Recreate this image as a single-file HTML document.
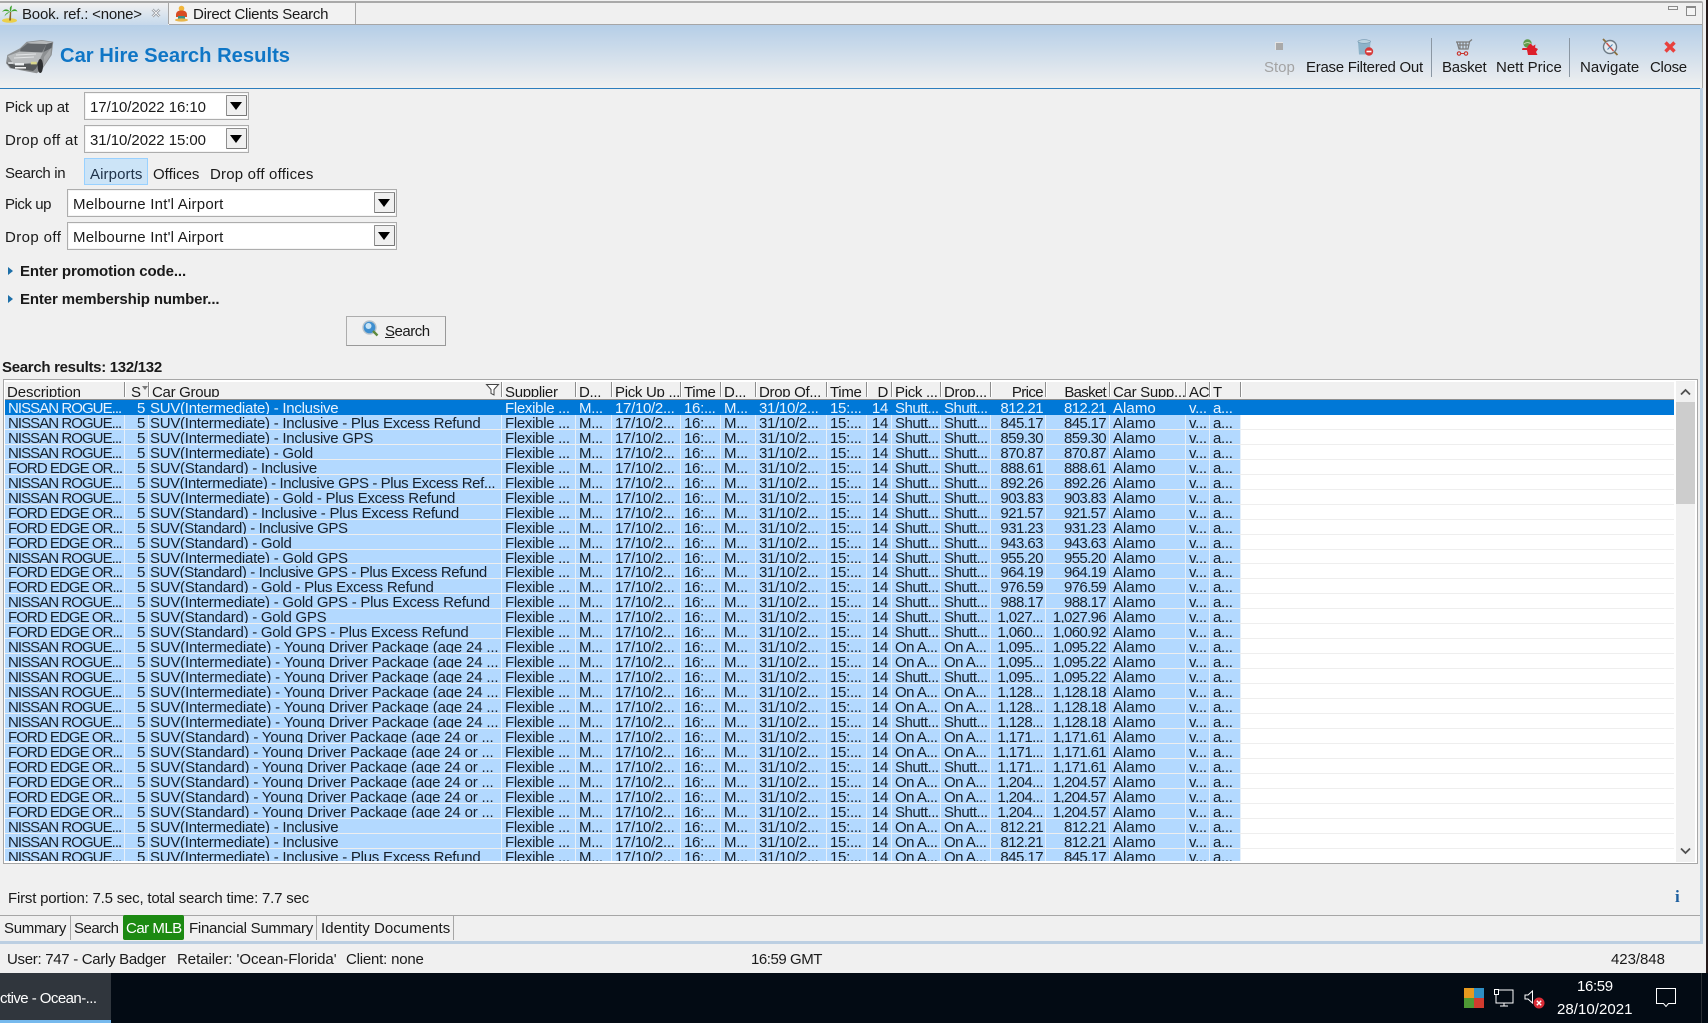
<!DOCTYPE html>
<html lang="en"><head><meta charset="utf-8"><title>Car Hire Search Results</title>
<style>
html,body{margin:0;padding:0}
body{width:1708px;height:1023px;position:relative;overflow:hidden;background:#f0f0f0;font-family:"Liberation Sans",sans-serif;font-size:15px;color:#1a1a1a}
.a,.t{position:absolute}
.t{white-space:nowrap;line-height:20px;height:20px;letter-spacing:-.12px;margin-top:1px}
.b{font-weight:bold}
.box{position:absolute;background:#fff;border:1px solid #adadad;box-sizing:border-box;box-shadow:inset 0 0 0 1px #f4f4f4}
.dd{position:absolute;width:21px;height:21px;box-sizing:border-box;background:#f0f0f0;border:1px solid #8f8f8f;border-radius:1px;border-right-color:#777;border-bottom-color:#777}
.dd:after{content:"";position:absolute;left:3px;top:6px;border-left:6.5px solid transparent;border-right:6.5px solid transparent;border-top:8px solid #000}
svg{position:absolute;overflow:visible}
#tbl{position:absolute;left:3px;top:379px;width:1695px;height:485px;box-sizing:border-box;border:1px solid #a6a6a6;background:#fff;box-shadow:inset 0 0 0 1px #fff}
#hd{position:absolute;left:5px;top:382px;width:1669px;height:17px;background:#f0f0f0;border-bottom:1px solid #8e8e8e;overflow:hidden;display:flex;line-height:17px}
#hd i{font-style:normal;display:block;box-sizing:border-box;height:15px;padding:2px 3px 0;line-height:17px;border-right:1px solid #8c8c8c;box-shadow:1px 0 0 #fff;white-space:nowrap;overflow:hidden;letter-spacing:-.3px;flex:none}
#rows{position:absolute;left:5px;top:400px;width:1669px;height:461px;overflow:hidden;background:#fff}
.r{height:14.96px;display:flex;overflow:hidden;box-sizing:border-box;border-bottom:1px solid #eeeeee;letter-spacing:-.3px;line-height:18px;color:#16202c}
.r i{font-style:normal;display:block;box-sizing:border-box;height:14px;padding:0 3px;background:#b3d9ff;border-right:1px solid #e6f0fa;white-space:nowrap;overflow:hidden;flex:none}
.r.s{background:#0078d7;color:#eaf4ff;border-bottom-color:#0078d7;height:14.96px}
.r.s i{background:#0078d7;border-right-color:#0078d7;height:15px}
.r i:nth-child(1),#hd i:nth-child(1){width:120px}
.r i:nth-child(2),#hd i:nth-child(2){width:24px;text-align:right}
.r i:nth-child(3),#hd i:nth-child(3){width:353px}
.r i:nth-child(4),#hd i:nth-child(4){width:74px}
.r i:nth-child(5),#hd i:nth-child(5){width:36px}
.r i:nth-child(6),#hd i:nth-child(6){width:69px}
.r i:nth-child(7),#hd i:nth-child(7){width:40px}
.r i:nth-child(8),#hd i:nth-child(8){width:35px}
.r i:nth-child(9),#hd i:nth-child(9){width:71px}
.r i:nth-child(10),#hd i:nth-child(10){width:40px}
.r i:nth-child(11),#hd i:nth-child(11){width:25px;text-align:right}
.r i:nth-child(12),#hd i:nth-child(12){width:49px}
.r i:nth-child(13),#hd i:nth-child(13){width:50px}
.r i:nth-child(14),#hd i:nth-child(14){width:55px;text-align:right}
.r i:nth-child(15),#hd i:nth-child(15){width:64px;text-align:right}
.r i:nth-child(16),#hd i:nth-child(16){width:76px}
.r i:nth-child(17),#hd i:nth-child(17){width:24px}
.r i:nth-child(18),#hd i:nth-child(18){width:31px}
.r i:nth-child(1){letter-spacing:-.95px}
.r i:nth-child(3){padding-left:1px;letter-spacing:-.26px}
.r.y i:nth-child(3){letter-spacing:-.18px}
.r.g i:nth-child(3){letter-spacing:-.4px}
.r i:nth-child(12),.r i:nth-child(13){letter-spacing:-.5px}
.r i:nth-child(14){letter-spacing:-.55px;padding-right:2px}
.r i:nth-child(15){letter-spacing:-.65px}
.r i:nth-child(16){letter-spacing:.05px}
#hd i:nth-child(1){padding-left:2px;letter-spacing:-.1px}
#hd i:nth-child(14){letter-spacing:-.6px;padding-right:2px}
#hd i:nth-child(15){letter-spacing:-.7px}
</style></head><body>

<!-- window tab strip -->
<div class="a" style="left:0;top:1px;width:1703px;height:2px;background:#a9a9a9;border-top-right-radius:4px"></div>
<div class="a" style="left:169px;top:24px;width:1534px;height:1px;background:#a6a6a6"></div>
<div class="a" style="left:0;top:3px;width:168px;height:22px;background:linear-gradient(#f0f0f0,#c6d9ec)"></div>
<div class="a" style="left:168px;top:3px;width:186px;height:21px;background:#f2f2f2;border-left:1px solid #a6a6a6;border-right:1px solid #a6a6a6"></div>
<svg style="left:1px;top:5px" width="17" height="18" viewBox="0 0 17 18"><ellipse cx="8.500" cy="15.500" rx="7.500" ry="2.300" fill="#ecd04a"/><path d="M8 15.500L9 7l1.200 0L10 15.500z" fill="#8a6a2a"/><path d="M9.500 7C6 3 3 4 1 7 3.500 5.500 6 6 9.500 7zM9.500 7C13 3 15 4 16.500 6.500 14 5.500 12 6 9.500 7zM9.500 7C8 3 9 1.500 11 .5 10.500 3 10.500 5 9.500 7zM9.500 7C6 7 4 9 3.500 11.500 5.500 9 7 8 9.500 7z" fill="#3fa32d"/></svg>
<div class="t" style="left:22px;top:4px;letter-spacing:-.2px">Book. ref.: &lt;none&gt;</div>
<svg style="left:151px;top:8px" width="10" height="10" viewBox="0 0 10 10"><path d="M1.500 1.500L8.500 8.500M8.500 1.500L1.500 8.500" stroke="#8d9298" stroke-width="2.600"/><path d="M1.500 1.500L8.500 8.500M8.500 1.500L1.500 8.500" stroke="#f4f4f4" stroke-width="1"/></svg>
<svg style="left:174px;top:5px" width="15" height="17" viewBox="0 0 15 17"><circle cx="7.500" cy="3.500" r="2.800" fill="#f2b63c"/><path d="M2 10C2 6 5 5.500 7.500 5.500S13 6 13 10L13 12 2 12z" fill="#d94c24"/><rect x="4" y="11" width="7" height="4" fill="#3a8f8a"/><ellipse cx="7.500" cy="15" rx="6.500" ry="1.600" fill="#e9b64a"/></svg>
<div class="t" style="left:193px;top:4px;letter-spacing:-.27px">Direct Clients Search</div>
<div class="a" style="left:1668px;top:6px;width:8px;height:2px;background:#f4f4f4;border:1px solid #8a8a8a"></div>
<div class="a" style="left:1686px;top:6px;width:8px;height:7px;border:1px solid #8a8a8a;border-top-width:2px;background:#f4f4f4"></div>

<!-- window frame -->
<div class="a" style="left:1702px;top:3px;width:1px;height:85px;background:#a9a9a9"></div>
<div class="a" style="left:1700px;top:88px;width:3px;height:855px;background:#bccfe2"></div>
<div class="a" style="left:1706px;top:0;width:2px;height:973px;background:#241a1a"></div>

<!-- header -->
<div class="a" style="left:0;top:25px;width:1702px;height:63px;background:linear-gradient(#b5cee7,#f0f0f0)"></div>
<div class="a" style="left:0;top:88px;width:1700px;height:1px;background:#2d7dbd"></div>
<svg style="left:6px;top:39px" width="48" height="35" viewBox="0 0 48 35"><path d="M0 24.300L1.300 16 14 9.300 20.700 2.700 35.700 1 47.300 2.700 45.700 16 35.700 31 30.700 34.300 4 29.300z" fill="#8d9092"/><path d="M21.500 3.500L35.700 1.800 46.500 3.200 42 5.500 28 6z" fill="#b7babc"/><path d="M14.500 10L21.500 4.500 40.500 5 36 13.500 14 13.500z" fill="#62666a"/><path d="M40.500 5L46.500 3.500 45.500 9 37.500 13z" fill="#5a5e62"/><path d="M1.800 17L14 12.500 37 13.500 32.500 23 8 25.500z" fill="#b9bcbe"/><path d="M10 16L30 15M8 19L28 18" stroke="#e2e4e6" stroke-width=".9" fill="none"/><path d="M.6 23.500L8 25.500 32.500 24.500 30 29.500 27 32 5 29z" fill="#55585a"/><rect x="9" y="24" width="9" height="2.400" fill="#e9ecee"/><rect x="24.800" y="22.800" width="6" height="2.600" fill="#d9d68c"/><rect x="2.200" y="23" width="5" height="2" fill="#cfd2d4"/><rect x="9" y="28" width="11" height="1.600" fill="#f0f0f0"/><ellipse cx="34.300" cy="27" rx="2.700" ry="7" fill="#2e3032"/><path d="M38 18L45 9 44.500 16 37 28z" fill="#a7aaac"/></svg>
<div class="t b" style="left:60px;top:44px;height:22px;line-height:22px;font-size:20.200px;color:#0f76c6;letter-spacing:0">Car Hire Search Results</div>

<!-- toolbar -->
<div class="a" style="left:1275px;top:42px;width:8px;height:8px;background:#a9a9a9;border-top:1px solid #e4e4e4;border-left:1px solid #e4e4e4;box-sizing:border-box"></div>
<svg style="left:1357px;top:39px" width="17" height="17" viewBox="0 0 17 17"><path d="M1 2.500h12.500L12.500 15.500H2z" fill="#8db3c9"/><ellipse cx="7.200" cy="2.500" rx="6.300" ry="1.800" fill="#bcd3e0" stroke="#6f94ab" stroke-width=".6"/><circle cx="12" cy="12.500" r="4.200" fill="#d63a3a"/><rect x="9.500" y="11.700" width="5" height="1.600" fill="#fff"/></svg>
<svg style="left:1455px;top:39px" width="18" height="17" viewBox="0 0 18 17"><path d="M1 3H14L17 .5M2 3L4 10H13L14.500 3M5 3V10M8 3V10M11 3V10M2.500 6H14" fill="none" stroke="#7c7c7c" stroke-width="1.200"/><circle cx="4" cy="14.500" r="1.700" fill="none" stroke="#c8332b" stroke-width="1.100"/><circle cx="11" cy="14.500" r="1.700" fill="none" stroke="#c8332b" stroke-width="1.100"/><path d="M5.500 14.500H9.500" stroke="#c8332b"/></svg>
<svg style="left:1521px;top:39px" width="17" height="17" viewBox="0 0 17 17"><circle cx="6.500" cy="4.500" r="4.200" fill="#5f9c4a"/><path d="M3 5C5 3 8 3 10 5" stroke="#c2d8a8" fill="none"/><path d="M7 7L9.500 4.500 12 7 14.500 5.500 14 8.500 17 10 15 13 16.500 16 7 16 6 11 1 11 1.500 9 6 9z" fill="#dd1f2b"/></svg>
<svg style="left:1601px;top:38px" width="18" height="18" viewBox="0 0 18 18"><circle cx="9" cy="9" r="6.500" fill="#e4ecf2" stroke="#6d7a85" stroke-width="1.400"/><path d="M5.500 5L12.500 13" stroke="#c8534a" stroke-width="1.500"/><path d="M2 1L5 4M13.500 14L16.500 17" stroke="#8a6f3e" stroke-width="1.800"/><path d="M6.500 11.500L11.500 6.500" stroke="#4a7fae" stroke-width="1"/></svg>
<svg style="left:1663px;top:40px" width="14" height="14" viewBox="0 0 14 14"><path d="M2.500 2.500L11.500 11.500M11.500 2.500L2.500 11.500" stroke="#e8413d" stroke-width="3.400"/></svg>
<div class="t" style="left:1264px;top:57px;color:#a3a3a3;letter-spacing:0">Stop</div>
<div class="t" style="left:1306px;top:57px;letter-spacing:-.27px">Erase Filtered Out</div>
<div class="a" style="left:1431px;top:38px;width:1px;height:39px;background:#8b97a3"></div>
<div class="t" style="left:1442px;top:57px;letter-spacing:-.25px">Basket</div>
<div class="t" style="left:1496px;top:57px;letter-spacing:0">Nett Price</div>
<div class="a" style="left:1569px;top:38px;width:1px;height:39px;background:#8b97a3"></div>
<div class="t" style="left:1580px;top:57px;letter-spacing:0">Navigate</div>
<div class="t" style="left:1650px;top:57px;letter-spacing:-.3px">Close</div>

<!-- form -->
<div class="t" style="left:5px;top:97px;letter-spacing:-.2px">Pick up at</div>
<div class="box" style="left:84px;top:92px;width:165px;height:28px"></div>
<div class="t" style="left:90px;top:97px;letter-spacing:-.05px">17/10/2022 16:10</div>
<div class="dd" style="left:226px;top:95px"></div>
<div class="t" style="left:5px;top:130px;letter-spacing:.3px">Drop off at</div>
<div class="box" style="left:84px;top:125px;width:165px;height:28px"></div>
<div class="t" style="left:90px;top:130px;letter-spacing:-.05px">31/10/2022 15:00</div>
<div class="dd" style="left:226px;top:128px"></div>
<div class="t" style="left:5px;top:163px;letter-spacing:-.35px">Search in</div>
<div class="a" style="left:84px;top:158px;width:64px;height:27px;box-sizing:border-box;background:#cce4f7;border:1px solid #99d1ff"></div>
<div class="t" style="left:90px;top:164px;color:#20334a;letter-spacing:.1px">Airports</div>
<div class="t" style="left:153px;top:164px;letter-spacing:0">Offices</div>
<div class="t" style="left:210px;top:164px;letter-spacing:.2px">Drop off offices</div>
<div class="t" style="left:5px;top:194px;letter-spacing:-.45px">Pick up</div>
<div class="box" style="left:67px;top:189px;width:330px;height:28px"></div>
<div class="t" style="left:73px;top:194px;letter-spacing:.22px">Melbourne Int'l Airport</div>
<div class="dd" style="left:374px;top:192px"></div>
<div class="t" style="left:5px;top:227px;letter-spacing:.4px">Drop off</div>
<div class="box" style="left:67px;top:222px;width:330px;height:28px"></div>
<div class="t" style="left:73px;top:227px;letter-spacing:.22px">Melbourne Int'l Airport</div>
<div class="dd" style="left:374px;top:225px"></div>
<div class="a" style="left:8px;top:267px;border-left:5px solid #1d6fa8;border-top:4.500px solid transparent;border-bottom:4.500px solid transparent"></div>
<div class="t b" style="left:20px;top:261px;letter-spacing:-.1px">Enter promotion code...</div>
<div class="a" style="left:8px;top:295px;border-left:5px solid #1d6fa8;border-top:4.500px solid transparent;border-bottom:4.500px solid transparent"></div>
<div class="t b" style="left:20px;top:289px;letter-spacing:-.12px">Enter membership number...</div>
<div class="a" style="left:346px;top:316px;width:100px;height:30px;box-sizing:border-box;background:#f0f0f0;border:1px solid #adadad;border-bottom-color:#999;border-right-color:#999"></div>
<svg style="left:362px;top:320px" width="17" height="17" viewBox="0 0 17 17"><circle cx="7.500" cy="7.500" r="6.500" fill="#3f8fd0" stroke="#b9c4cc" stroke-width="1.400"/><circle cx="6.500" cy="6" r="3" fill="#c8e4f6"/><path d="M11 11L15.500 15.500" stroke="#5f8a3c" stroke-width="2.400"/></svg>
<div class="t" style="left:385px;top:321px;letter-spacing:-.5px"><span style="text-decoration:underline">S</span>earch</div>

<div class="t b" style="left:2px;top:357px;letter-spacing:-.3px">Search results: 132/132</div>

<!-- table -->
<div id="tbl"></div>
<div id="hd"><i>Description</i><i style="text-align:left;padding-left:6px">S</i><i>Car Group</i><i>Supplier</i><i>D...</i><i>Pick Up ...</i><i>Time</i><i>D...</i><i>Drop Of...</i><i>Time</i><i>D</i><i>Pick ...</i><i>Drop...</i><i>Price</i><i>Basket</i><i>Car Supp...</i><i>AC</i><i>T</i></div>
<div class="a" style="left:142px;top:386px;border-top:4px solid #777;border-left:3.500px solid transparent;border-right:3.500px solid transparent"></div>
<svg style="left:486px;top:384px" width="13" height="12" viewBox="0 0 13 12"><path d="M.5 .5H12.500L8 5.500V11L5 9.500V5.500z" fill="#fff" stroke="#444" stroke-width="1"/></svg>
<div id="rows">
<div class="r s"><i>NISSAN ROGUE...</i><i>5</i><i>SUV(Intermediate) - Inclusive</i><i>Flexible ...</i><i>M...</i><i>17/10/2...</i><i>16:...</i><i>M...</i><i>31/10/2...</i><i>15:...</i><i>14</i><i>Shutt...</i><i>Shutt...</i><i>812.21</i><i>812.21</i><i>Alamo</i><i>v...</i><i>a...</i></div>
<div class="r"><i>NISSAN ROGUE...</i><i>5</i><i>SUV(Intermediate) - Inclusive - Plus Excess Refund</i><i>Flexible ...</i><i>M...</i><i>17/10/2...</i><i>16:...</i><i>M...</i><i>31/10/2...</i><i>15:...</i><i>14</i><i>Shutt...</i><i>Shutt...</i><i>845.17</i><i>845.17</i><i>Alamo</i><i>v...</i><i>a...</i></div>
<div class="r"><i>NISSAN ROGUE...</i><i>5</i><i>SUV(Intermediate) - Inclusive GPS</i><i>Flexible ...</i><i>M...</i><i>17/10/2...</i><i>16:...</i><i>M...</i><i>31/10/2...</i><i>15:...</i><i>14</i><i>Shutt...</i><i>Shutt...</i><i>859.30</i><i>859.30</i><i>Alamo</i><i>v...</i><i>a...</i></div>
<div class="r"><i>NISSAN ROGUE...</i><i>5</i><i>SUV(Intermediate) - Gold</i><i>Flexible ...</i><i>M...</i><i>17/10/2...</i><i>16:...</i><i>M...</i><i>31/10/2...</i><i>15:...</i><i>14</i><i>Shutt...</i><i>Shutt...</i><i>870.87</i><i>870.87</i><i>Alamo</i><i>v...</i><i>a...</i></div>
<div class="r"><i>FORD EDGE OR...</i><i>5</i><i>SUV(Standard) - Inclusive</i><i>Flexible ...</i><i>M...</i><i>17/10/2...</i><i>16:...</i><i>M...</i><i>31/10/2...</i><i>15:...</i><i>14</i><i>Shutt...</i><i>Shutt...</i><i>888.61</i><i>888.61</i><i>Alamo</i><i>v...</i><i>a...</i></div>
<div class="r g"><i>NISSAN ROGUE...</i><i>5</i><i>SUV(Intermediate) - Inclusive GPS - Plus Excess Ref...</i><i>Flexible ...</i><i>M...</i><i>17/10/2...</i><i>16:...</i><i>M...</i><i>31/10/2...</i><i>15:...</i><i>14</i><i>Shutt...</i><i>Shutt...</i><i>892.26</i><i>892.26</i><i>Alamo</i><i>v...</i><i>a...</i></div>
<div class="r"><i>NISSAN ROGUE...</i><i>5</i><i>SUV(Intermediate) - Gold - Plus Excess Refund</i><i>Flexible ...</i><i>M...</i><i>17/10/2...</i><i>16:...</i><i>M...</i><i>31/10/2...</i><i>15:...</i><i>14</i><i>Shutt...</i><i>Shutt...</i><i>903.83</i><i>903.83</i><i>Alamo</i><i>v...</i><i>a...</i></div>
<div class="r"><i>FORD EDGE OR...</i><i>5</i><i>SUV(Standard) - Inclusive - Plus Excess Refund</i><i>Flexible ...</i><i>M...</i><i>17/10/2...</i><i>16:...</i><i>M...</i><i>31/10/2...</i><i>15:...</i><i>14</i><i>Shutt...</i><i>Shutt...</i><i>921.57</i><i>921.57</i><i>Alamo</i><i>v...</i><i>a...</i></div>
<div class="r g"><i>FORD EDGE OR...</i><i>5</i><i>SUV(Standard) - Inclusive GPS</i><i>Flexible ...</i><i>M...</i><i>17/10/2...</i><i>16:...</i><i>M...</i><i>31/10/2...</i><i>15:...</i><i>14</i><i>Shutt...</i><i>Shutt...</i><i>931.23</i><i>931.23</i><i>Alamo</i><i>v...</i><i>a...</i></div>
<div class="r"><i>FORD EDGE OR...</i><i>5</i><i>SUV(Standard) - Gold</i><i>Flexible ...</i><i>M...</i><i>17/10/2...</i><i>16:...</i><i>M...</i><i>31/10/2...</i><i>15:...</i><i>14</i><i>Shutt...</i><i>Shutt...</i><i>943.63</i><i>943.63</i><i>Alamo</i><i>v...</i><i>a...</i></div>
<div class="r"><i>NISSAN ROGUE...</i><i>5</i><i>SUV(Intermediate) - Gold GPS</i><i>Flexible ...</i><i>M...</i><i>17/10/2...</i><i>16:...</i><i>M...</i><i>31/10/2...</i><i>15:...</i><i>14</i><i>Shutt...</i><i>Shutt...</i><i>955.20</i><i>955.20</i><i>Alamo</i><i>v...</i><i>a...</i></div>
<div class="r g"><i>FORD EDGE OR...</i><i>5</i><i>SUV(Standard) - Inclusive GPS - Plus Excess Refund</i><i>Flexible ...</i><i>M...</i><i>17/10/2...</i><i>16:...</i><i>M...</i><i>31/10/2...</i><i>15:...</i><i>14</i><i>Shutt...</i><i>Shutt...</i><i>964.19</i><i>964.19</i><i>Alamo</i><i>v...</i><i>a...</i></div>
<div class="r"><i>FORD EDGE OR...</i><i>5</i><i>SUV(Standard) - Gold - Plus Excess Refund</i><i>Flexible ...</i><i>M...</i><i>17/10/2...</i><i>16:...</i><i>M...</i><i>31/10/2...</i><i>15:...</i><i>14</i><i>Shutt...</i><i>Shutt...</i><i>976.59</i><i>976.59</i><i>Alamo</i><i>v...</i><i>a...</i></div>
<div class="r"><i>NISSAN ROGUE...</i><i>5</i><i>SUV(Intermediate) - Gold GPS - Plus Excess Refund</i><i>Flexible ...</i><i>M...</i><i>17/10/2...</i><i>16:...</i><i>M...</i><i>31/10/2...</i><i>15:...</i><i>14</i><i>Shutt...</i><i>Shutt...</i><i>988.17</i><i>988.17</i><i>Alamo</i><i>v...</i><i>a...</i></div>
<div class="r"><i>FORD EDGE OR...</i><i>5</i><i>SUV(Standard) - Gold GPS</i><i>Flexible ...</i><i>M...</i><i>17/10/2...</i><i>16:...</i><i>M...</i><i>31/10/2...</i><i>15:...</i><i>14</i><i>Shutt...</i><i>Shutt...</i><i>1,027...</i><i>1,027.96</i><i>Alamo</i><i>v...</i><i>a...</i></div>
<div class="r"><i>FORD EDGE OR...</i><i>5</i><i>SUV(Standard) - Gold GPS - Plus Excess Refund</i><i>Flexible ...</i><i>M...</i><i>17/10/2...</i><i>16:...</i><i>M...</i><i>31/10/2...</i><i>15:...</i><i>14</i><i>Shutt...</i><i>Shutt...</i><i>1,060...</i><i>1,060.92</i><i>Alamo</i><i>v...</i><i>a...</i></div>
<div class="r y"><i>NISSAN ROGUE...</i><i>5</i><i>SUV(Intermediate) - Young Driver Package (age 24 ...</i><i>Flexible ...</i><i>M...</i><i>17/10/2...</i><i>16:...</i><i>M...</i><i>31/10/2...</i><i>15:...</i><i>14</i><i>On A...</i><i>On A...</i><i>1,095...</i><i>1,095.22</i><i>Alamo</i><i>v...</i><i>a...</i></div>
<div class="r y"><i>NISSAN ROGUE...</i><i>5</i><i>SUV(Intermediate) - Young Driver Package (age 24 ...</i><i>Flexible ...</i><i>M...</i><i>17/10/2...</i><i>16:...</i><i>M...</i><i>31/10/2...</i><i>15:...</i><i>14</i><i>On A...</i><i>On A...</i><i>1,095...</i><i>1,095.22</i><i>Alamo</i><i>v...</i><i>a...</i></div>
<div class="r y"><i>NISSAN ROGUE...</i><i>5</i><i>SUV(Intermediate) - Young Driver Package (age 24 ...</i><i>Flexible ...</i><i>M...</i><i>17/10/2...</i><i>16:...</i><i>M...</i><i>31/10/2...</i><i>15:...</i><i>14</i><i>Shutt...</i><i>Shutt...</i><i>1,095...</i><i>1,095.22</i><i>Alamo</i><i>v...</i><i>a...</i></div>
<div class="r y"><i>NISSAN ROGUE...</i><i>5</i><i>SUV(Intermediate) - Young Driver Package (age 24 ...</i><i>Flexible ...</i><i>M...</i><i>17/10/2...</i><i>16:...</i><i>M...</i><i>31/10/2...</i><i>15:...</i><i>14</i><i>On A...</i><i>On A...</i><i>1,128...</i><i>1,128.18</i><i>Alamo</i><i>v...</i><i>a...</i></div>
<div class="r y"><i>NISSAN ROGUE...</i><i>5</i><i>SUV(Intermediate) - Young Driver Package (age 24 ...</i><i>Flexible ...</i><i>M...</i><i>17/10/2...</i><i>16:...</i><i>M...</i><i>31/10/2...</i><i>15:...</i><i>14</i><i>On A...</i><i>On A...</i><i>1,128...</i><i>1,128.18</i><i>Alamo</i><i>v...</i><i>a...</i></div>
<div class="r y"><i>NISSAN ROGUE...</i><i>5</i><i>SUV(Intermediate) - Young Driver Package (age 24 ...</i><i>Flexible ...</i><i>M...</i><i>17/10/2...</i><i>16:...</i><i>M...</i><i>31/10/2...</i><i>15:...</i><i>14</i><i>Shutt...</i><i>Shutt...</i><i>1,128...</i><i>1,128.18</i><i>Alamo</i><i>v...</i><i>a...</i></div>
<div class="r y"><i>FORD EDGE OR...</i><i>5</i><i>SUV(Standard) - Young Driver Package (age 24 or ...</i><i>Flexible ...</i><i>M...</i><i>17/10/2...</i><i>16:...</i><i>M...</i><i>31/10/2...</i><i>15:...</i><i>14</i><i>On A...</i><i>On A...</i><i>1,171...</i><i>1,171.61</i><i>Alamo</i><i>v...</i><i>a...</i></div>
<div class="r y"><i>FORD EDGE OR...</i><i>5</i><i>SUV(Standard) - Young Driver Package (age 24 or ...</i><i>Flexible ...</i><i>M...</i><i>17/10/2...</i><i>16:...</i><i>M...</i><i>31/10/2...</i><i>15:...</i><i>14</i><i>On A...</i><i>On A...</i><i>1,171...</i><i>1,171.61</i><i>Alamo</i><i>v...</i><i>a...</i></div>
<div class="r y"><i>FORD EDGE OR...</i><i>5</i><i>SUV(Standard) - Young Driver Package (age 24 or ...</i><i>Flexible ...</i><i>M...</i><i>17/10/2...</i><i>16:...</i><i>M...</i><i>31/10/2...</i><i>15:...</i><i>14</i><i>Shutt...</i><i>Shutt...</i><i>1,171...</i><i>1,171.61</i><i>Alamo</i><i>v...</i><i>a...</i></div>
<div class="r y"><i>FORD EDGE OR...</i><i>5</i><i>SUV(Standard) - Young Driver Package (age 24 or ...</i><i>Flexible ...</i><i>M...</i><i>17/10/2...</i><i>16:...</i><i>M...</i><i>31/10/2...</i><i>15:...</i><i>14</i><i>On A...</i><i>On A...</i><i>1,204...</i><i>1,204.57</i><i>Alamo</i><i>v...</i><i>a...</i></div>
<div class="r y"><i>FORD EDGE OR...</i><i>5</i><i>SUV(Standard) - Young Driver Package (age 24 or ...</i><i>Flexible ...</i><i>M...</i><i>17/10/2...</i><i>16:...</i><i>M...</i><i>31/10/2...</i><i>15:...</i><i>14</i><i>On A...</i><i>On A...</i><i>1,204...</i><i>1,204.57</i><i>Alamo</i><i>v...</i><i>a...</i></div>
<div class="r y"><i>FORD EDGE OR...</i><i>5</i><i>SUV(Standard) - Young Driver Package (age 24 or ...</i><i>Flexible ...</i><i>M...</i><i>17/10/2...</i><i>16:...</i><i>M...</i><i>31/10/2...</i><i>15:...</i><i>14</i><i>Shutt...</i><i>Shutt...</i><i>1,204...</i><i>1,204.57</i><i>Alamo</i><i>v...</i><i>a...</i></div>
<div class="r"><i>NISSAN ROGUE...</i><i>5</i><i>SUV(Intermediate) - Inclusive</i><i>Flexible ...</i><i>M...</i><i>17/10/2...</i><i>16:...</i><i>M...</i><i>31/10/2...</i><i>15:...</i><i>14</i><i>On A...</i><i>On A...</i><i>812.21</i><i>812.21</i><i>Alamo</i><i>v...</i><i>a...</i></div>
<div class="r"><i>NISSAN ROGUE...</i><i>5</i><i>SUV(Intermediate) - Inclusive</i><i>Flexible ...</i><i>M...</i><i>17/10/2...</i><i>16:...</i><i>M...</i><i>31/10/2...</i><i>15:...</i><i>14</i><i>On A...</i><i>On A...</i><i>812.21</i><i>812.21</i><i>Alamo</i><i>v...</i><i>a...</i></div>
<div class="r"><i>NISSAN ROGUE...</i><i>5</i><i>SUV(Intermediate) - Inclusive - Plus Excess Refund</i><i>Flexible ...</i><i>M...</i><i>17/10/2...</i><i>16:...</i><i>M...</i><i>31/10/2...</i><i>15:...</i><i>14</i><i>On A...</i><i>On A...</i><i>845.17</i><i>845.17</i><i>Alamo</i><i>v...</i><i>a...</i></div>
</div>
<!-- scrollbar -->
<div class="a" style="left:1676px;top:381px;width:19px;height:481px;background:#f0f0f0"></div>
<div class="a" style="left:1676px;top:402px;width:19px;height:102px;background:#cdcdcd"></div>
<svg style="left:1680px;top:388px" width="11" height="8" viewBox="0 0 11 8"><path d="M1 6.500L5.500 2 10 6.500" fill="none" stroke="#505050" stroke-width="1.800"/></svg>
<svg style="left:1680px;top:847px" width="11" height="8" viewBox="0 0 11 8"><path d="M1 1.500L5.500 6 10 1.500" fill="none" stroke="#505050" stroke-width="1.800"/></svg>

<!-- footer -->
<div class="t" style="left:8px;top:888px;letter-spacing:-.2px">First portion: 7.5 sec, total search time: 7.7 sec</div>
<div class="t b" style="left:1675px;top:886px;font-family:'Liberation Serif',serif;font-size:17px;color:#1d5f9f">i</div>
<div class="a" style="left:0;top:915px;width:1700px;height:1px;background:#a6a6a6"></div>
<div class="a" style="left:70px;top:915px;width:1px;height:25px;background:#a6a6a6"></div>
<div class="a" style="left:123px;top:915px;width:61px;height:25px;background:#1c8a12;border-radius:2px"></div>
<div class="a" style="left:316px;top:915px;width:1px;height:25px;background:#a6a6a6"></div>
<div class="a" style="left:453px;top:915px;width:1px;height:25px;background:#a6a6a6"></div>
<div class="t" style="left:4px;top:918px;letter-spacing:-.3px">Summary</div>
<div class="t" style="left:74px;top:918px;letter-spacing:-.5px">Search</div>
<div class="t" style="left:126px;top:918px;color:#fff;letter-spacing:-.5px">Car MLB</div>
<div class="t" style="left:189px;top:918px;letter-spacing:-.26px">Financial Summary</div>
<div class="t" style="left:321px;top:918px;letter-spacing:.05px">Identity Documents</div>
<div class="a" style="left:0;top:941px;width:1703px;height:3px;background:#bccfe2"></div>
<div class="t" style="left:7px;top:949px;letter-spacing:-.3px">User: 747 - Carly Badger</div>
<div class="t" style="left:177px;top:949px;letter-spacing:-.05px">Retailer: 'Ocean-Florida'</div>
<div class="t" style="left:346px;top:949px;letter-spacing:-.2px">Client: none</div>
<div class="t" style="left:751px;top:949px;letter-spacing:-.45px">16:59 GMT</div>
<div class="t" style="left:1611px;top:949px;letter-spacing:-.05px">423/848</div>

<!-- taskbar -->
<div class="a" style="left:0;top:973px;width:1708px;height:50px;background:#030b14"></div>
<div class="a" style="left:0;top:973px;width:111px;height:47px;background:#30363d"></div>
<div class="a" style="left:0;top:1020px;width:111px;height:3px;background:#76b9ed"></div>
<div class="t" style="left:0;top:988px;color:#fff;letter-spacing:-.55px">ctive - Ocean-...</div>
<svg style="left:1464px;top:988px" width="20" height="20" viewBox="0 0 20 20"><rect width="10" height="10" fill="#e79a1f"/><rect x="10" width="10" height="10" fill="#2f8fc4"/><rect y="10" width="10" height="10" fill="#4f9a35"/><rect x="10" y="10" width="10" height="10" fill="#d23b2e"/></svg>
<svg style="left:1494px;top:989px" width="20" height="18" viewBox="0 0 20 18"><path d="M1 1H19V14H2V5M10 14V17M6 17H14" fill="none" stroke="#fff" stroke-width="1"/><rect x=".5" y=".5" width="4" height="5" fill="#030b14" stroke="#fff"/></svg>
<svg style="left:1524px;top:990px" width="21" height="19" viewBox="0 0 21 19"><path d="M1 5H4L8.500 1V13L4 9H1z" fill="none" stroke="#fff" stroke-width="1"/><circle cx="15" cy="13" r="5.500" fill="#d92b35"/><path d="M12.800 10.800L17.200 15.200M17.200 10.800L12.800 15.200" stroke="#fff" stroke-width="1.400"/></svg>
<div class="t" style="left:1577px;top:976px;color:#fff;letter-spacing:-.35px">16:59</div>
<div class="t" style="left:1557px;top:999px;color:#fff;letter-spacing:.05px">28/10/2021</div>
<svg style="left:1656px;top:988px" width="20" height="20" viewBox="0 0 20 20"><path d="M.5 .5H19.500V15.500H12.500L10 18.500 7.500 15.500H.5z" fill="none" stroke="#fff" stroke-width="1"/></svg>
<div class="a" style="left:1701px;top:973px;width:1px;height:50px;background:#2a2f35"></div>
</body></html>
